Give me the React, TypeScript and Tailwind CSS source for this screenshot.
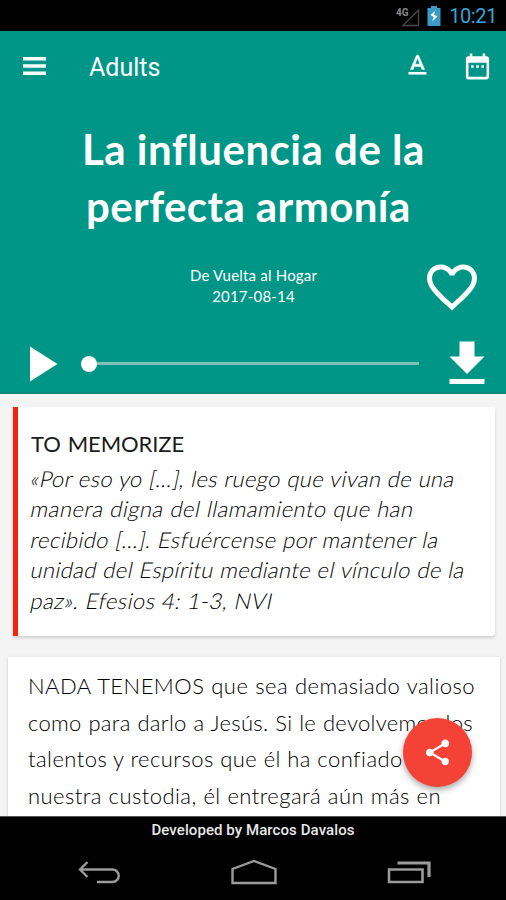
import {
  MdDateRange,
  MdFavoriteBorder,
  MdGetApp,
  MdPlayArrow,
  MdShare,
} from 'react-icons/md';

// Each line keeps its own measure so the breaks stay fixed
const verseLines = [
  { text: '«Por eso yo [...], les ruego que vivan de una', width: 'w-[424px] tracking-[0.37px]' },
  { text: 'manera digna del llamamiento que han', width: 'w-[383px] tracking-[0.48px]' },
  { text: 'recibido [...]. Esfuércense por mantener la', width: 'w-[408px] tracking-[0.37px]' },
  { text: 'unidad del Espíritu mediante el vínculo de la', width: 'w-[434px] tracking-[0.37px]' },
  { text: 'paz». Efesios 4: 1-3, NVI', width: 'w-[242px] tracking-[0.43px]' },
];

const bodyLines = [
  { text: 'NADA TENEMOS que sea demasiado valioso', width: 'w-[447px] tracking-[0.45px]' },
  { text: 'como para darlo a Jesús. Si le devolvemos los', width: 'w-[445px] tracking-[0.3px]' },
  { text: 'talentos y recursos que él ha confiado a', width: 'w-[391px] tracking-[0.45px]' },
  { text: 'nuestra custodia, él entregará aún más en', width: 'w-[413px] tracking-[0.45px]' },
];

function StatusBar() {
  return (
    <div className="flex h-[31px] shrink-0 items-center justify-end bg-black pr-[9px]">
      <svg className="mt-[2px] h-[22px] w-[26px]" viewBox="0 0 26 22">
        <path d="M22.500 4V19.500H7Z" fill="none" stroke="#4a4a4a" strokeWidth="1.3" />
        <text x="0" y="9.500" fill="#8a8a8a" fontSize="10" fontWeight="700" fontFamily="Roboto, sans-serif">
          4G
        </text>
      </svg>
      <svg className="ml-[5px] h-[20px] w-[14px]" viewBox="0 0 14 20">
        <path d="M4 0h6v2h3.5v18H.5V2H4z" fill="#3a9cc6" />
        <path d="M8 5L3.5 9l3.2 2L5 15.500l5.500-5-3.300-1.800z" fill="#fff" />
      </svg>
      <span className="ml-[8px] text-[20px] leading-none tracking-[-0.4px] text-[#35a5d6]">10:21</span>
    </div>
  );
}

function Header() {
  return (
    <header className="h-[363px] shrink-0 border-b-2 border-[#0a8a7c] bg-[#009687] text-white">
      <div className="flex h-[70px] items-center pr-[13px] pl-[23px]">
        <svg className="h-[18px] w-[23px]" viewBox="0 0 23 18" fill="currentColor">
          <path d="M0 0h23v3.500H0zM0 7.200h23v3.500H0zM0 14.500h23v3.500H0z" />
        </svg>
        <span className="mt-[3px] ml-[43px] text-[25px] leading-none">Adults</span>
        <svg className="mt-[-2px] ml-auto size-[31px]" viewBox="0 0 24 24" fill="currentColor">
          <path d="M5 17v2h14v-2H5z" />
          <path
            d="M9.500 12.800h5l.9 2.200h2.100L12.750 4h-1.500L6.500 15h2.100l.9-2.200zM12 5.980L13.870 11h-3.740L12 5.980z"
            stroke="currentColor"
            strokeWidth="0.4"
          />
        </svg>
        <MdDateRange className="ml-[29px] size-[31px]" />
      </div>

      <h1 className="mt-[20px] flex flex-col items-center font-['Lato',sans-serif] text-[42px] leading-[57px] font-bold whitespace-nowrap">
        <span className="block w-[342px] tracking-[0.5px] [text-align-last:justify]">La influencia de la</span>
        <span className="mr-[10px] block w-[324px] tracking-[0.4px] [text-align-last:justify]">perfecta armonía</span>
      </h1>

      <div className="mt-[10px] flex h-[89px] items-start justify-between pt-[3px] pr-[24px]">
        <div className="w-[60px]" />
        <div className="mt-[17px] ml-[25px] text-center font-['Lato',sans-serif] text-[15px] leading-[21px] tracking-[0.2px]">
          <p>De Vuelta al Hogar</p>
          <p>2017-08-14</p>
        </div>
        <MdFavoriteBorder className="mt-[9px] size-[60px]" />
      </div>

      <div className="flex h-[60px] items-center">
        <MdPlayArrow className="ml-[10px] size-[60px]" />
        <div className="ml-[11px] flex w-[338px] items-center">
          <span className="size-[16px] rounded-full bg-white" />
          <span className="mt-[-1px] h-[3px] flex-1 bg-[#7ebfb7]" />
        </div>
        <MdGetApp className="ml-[18px] size-[60px]" />
      </div>
    </header>
  );
}

function NavigationBar() {
  return (
    <nav className="flex h-[60px] items-center justify-between pt-[3px] pr-[75px] pl-[78px] text-[#9b9b9b]">
      <svg className="h-[24px] w-[42px]" viewBox="0 0 42 24" fill="none" stroke="currentColor" strokeWidth="2.4">
        <path d="M9.500 2L2 9.500l7.500 7.500M2 9.500h32.500a6 6 0 0 1 0 12.500H19" />
      </svg>
      <svg className="h-[26px] w-[46px]" viewBox="0 0 46 26" fill="none" stroke="currentColor" strokeWidth="2.4">
        <path d="M1.500 24V10L23 2l21.500 8v14z" />
      </svg>
      <svg className="h-[24px] w-[44px]" viewBox="0 0 44 24" fill="none" stroke="currentColor">
        <path d="M2 9.500h33.500v12.500H2z" strokeWidth="2.600" />
        <path d="M10.500 3h31.500v14" strokeWidth="3.200" />
      </svg>
    </nav>
  );
}

export default function App() {
  return (
    <div className="relative flex h-[900px] w-[506px] flex-col overflow-hidden bg-[#f4f4f4] font-['Roboto',sans-serif]">
      <StatusBar />
      <Header />

      <main className="h-[422px] shrink-0 overflow-hidden pt-[13px] font-['Lato',sans-serif] whitespace-nowrap text-black">
        <section className="mr-[11px] ml-[13px] h-[229px] rounded-r-[3px] border-l-[5px] border-[#f3220f] bg-white pt-[19px] pl-[13px] shadow-[0_2px_3px_rgba(0,0,0,0.15)]">
          <h2 className="mb-[2px] w-[153px] text-[22px] leading-[36px] tracking-[-0.1px] text-[#1c1c1c] [text-align-last:justify]">TO MEMORIZE</h2>
          {verseLines.map((line) => (
            <p
              key={line.text}
              className={`${line.width} -skew-x-12 text-[22px] leading-[30.4px] font-light [text-align-last:justify]`}
            >
              {line.text}
            </p>
          ))}
        </section>

        <section className="mt-[21px] mr-[6px] ml-[8px] h-[220px] bg-white pt-[11px] pl-[20px] shadow-[0_1px_3px_rgba(0,0,0,0.18)]">
          {bodyLines.map((line) => (
            <p
              key={line.text}
              className={`${line.width} text-[22px] leading-[36.7px] font-light [text-align-last:justify]`}
            >
              {line.text}
            </p>
          ))}
        </section>
      </main>

      <footer className="h-[84px] shrink-0 border-t border-[#555] bg-black">
        <p className="h-[23px] pt-[2px] text-center text-[15px] leading-[23px] font-medium tracking-[0.08px] text-[#e8e8e8]">
          Developed by Marcos Davalos
        </p>
        <NavigationBar />
      </footer>

      <button
        type="button"
        className="absolute top-[718px] left-[403px] flex size-[69px] items-center justify-center rounded-full bg-[#f44336] text-white shadow-[0_3px_6px_rgba(0,0,0,0.35)]"
      >
        <MdShare className="size-[31px]" />
      </button>
    </div>
  );
}
